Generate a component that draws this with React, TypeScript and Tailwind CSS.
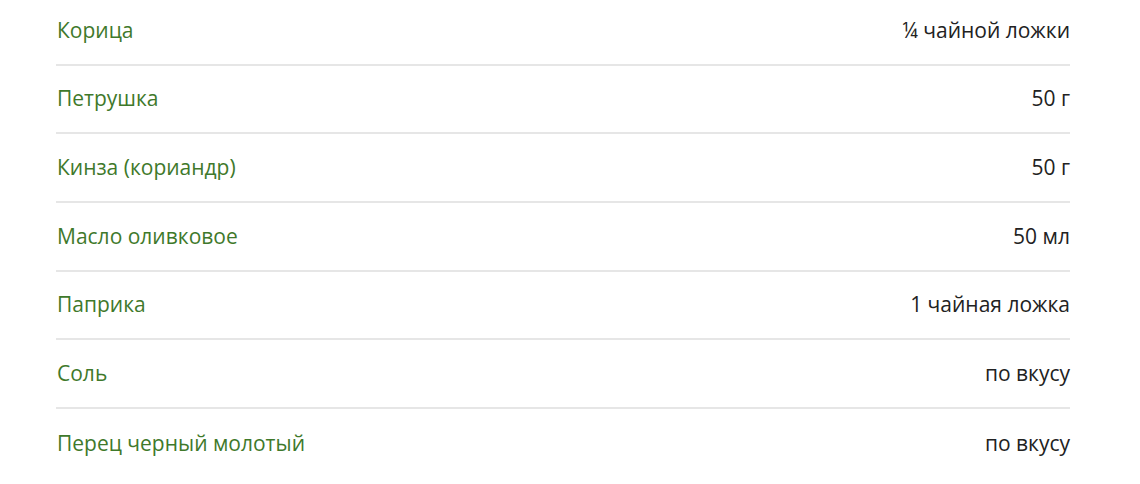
import React from 'react';

interface Ingredient {
    name: string;
    amount: string;
}

const ingredients: Ingredient[] = [
    { name: 'Корица', amount: '¼ чайной ложки' },
    { name: 'Петрушка', amount: '50 г' },
    { name: 'Кинза (кориандр)', amount: '50 г' },
    { name: 'Масло оливковое', amount: '50 мл' },
    { name: 'Паприка', amount: '1 чайная ложка' },
    { name: 'Соль', amount: 'по вкусу' },
    { name: 'Перец черный молотый', amount: 'по вкусу' },
];

const App: React.FC = () => {
    return (
        <div className="w-[1140px] h-[484px] overflow-hidden bg-white font-['Open_Sans',sans-serif]">
            <ul className="mx-[56px] mt-[-3px] w-[1014px]">
                {ingredients.map((item, i) => (
                    <li
                        key={item.name}
                        className={`flex h-[68.67px] items-center justify-between text-[21px] font-medium ${i < ingredients.length - 1 ? 'border-b-2 border-[#e6e6e6]' : ''}`}
                    >
                        <span className="pl-px text-[#3f792b]">{item.name}</span>
                        <span className="text-[#222222]">{item.amount}</span>
                    </li>
                ))}
            </ul>
        </div>
    );
};

export default App;
